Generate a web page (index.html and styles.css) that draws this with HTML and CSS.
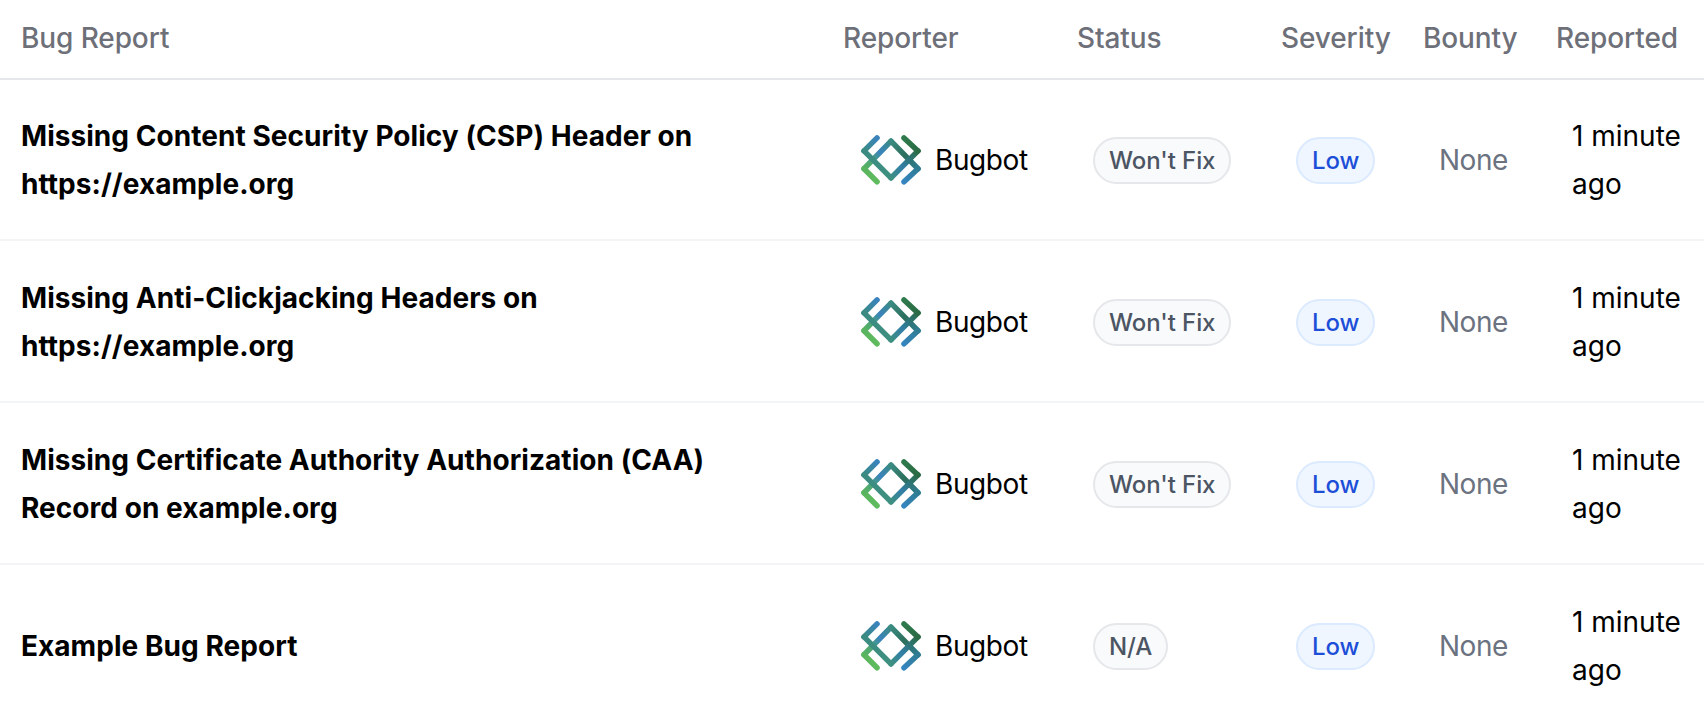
FILE: index.html
```html
<!DOCTYPE html>
<html lang="en">
<head>
<meta charset="utf-8">
<title>Bug Reports</title>
<link rel="stylesheet" href="styles.css">
</head>
<body>
<svg class="defs" width="0" height="0" aria-hidden="true">
  <defs>
    <linearGradient id="g1" gradientUnits="userSpaceOnUse" x1="112" y1="52" x2="72" y2="92"><stop offset="0" stop-color="#3a83bd"/><stop offset="1" stop-color="#3b8b82"/></linearGradient>
    <linearGradient id="g2" gradientUnits="userSpaceOnUse" x1="72" y1="92" x2="155" y2="175"><stop offset="0" stop-color="#3b8b82"/><stop offset="1" stop-color="#3e9080"/></linearGradient>
    <linearGradient id="g3" gradientUnits="userSpaceOnUse" x1="155" y1="175" x2="238" y2="92"><stop offset="0" stop-color="#3e9080"/><stop offset="0.4" stop-color="#327fa8"/><stop offset="1" stop-color="#2a6b45"/></linearGradient>
    <linearGradient id="g4" gradientUnits="userSpaceOnUse" x1="238" y1="92" x2="195" y2="52"><stop offset="0" stop-color="#2a6b45"/><stop offset="1" stop-color="#2f7a4c"/></linearGradient>
    <linearGradient id="g5" gradientUnits="userSpaceOnUse" x1="112" y1="187" x2="72" y2="147"><stop offset="0" stop-color="#5fbb5e"/><stop offset="1" stop-color="#5ab55e"/></linearGradient>
    <linearGradient id="g6" gradientUnits="userSpaceOnUse" x1="72" y1="147" x2="155" y2="62"><stop offset="0" stop-color="#5ab55e"/><stop offset="0.3" stop-color="#4aa37a"/><stop offset="0.6" stop-color="#3a83bd"/><stop offset="1" stop-color="#3b8b82"/></linearGradient>
    <linearGradient id="g7" gradientUnits="userSpaceOnUse" x1="155" y1="62" x2="238" y2="147"><stop offset="0" stop-color="#3b8b82"/><stop offset="0.5" stop-color="#2c6f5c"/><stop offset="1" stop-color="#2f7c92"/></linearGradient>
    <linearGradient id="g8" gradientUnits="userSpaceOnUse" x1="238" y1="147" x2="195" y2="187"><stop offset="0" stop-color="#2f7c92"/><stop offset="1" stop-color="#3585c0"/></linearGradient>
    <symbol id="bugbot" viewBox="60 40 190 160">
      <g fill="none" stroke-width="17" stroke-linecap="round" stroke-linejoin="round">
        <path stroke="url(#g5)" d="M112 187L72 147"/>
        <path stroke="url(#g6)" d="M72 147L155 62"/>
        <path stroke="url(#g7)" d="M155 62L238 147"/>
        <path stroke="url(#g8)" d="M238 147L195 187"/>
        <path stroke="url(#g1)" d="M112 52L72 92"/>
        <path stroke="url(#g2)" d="M72 92L155 175"/>
        <path stroke="url(#g3)" d="M155 175L238 92"/>
        <path stroke="url(#g4)" d="M238 92L195 52"/>
      </g>
    </symbol>
  </defs>
</svg>
<table class="reports">
  <colgroup>
    <col class="c-title"><col class="c-reporter"><col class="c-status"><col class="c-severity"><col class="c-bounty"><col class="c-reported">
  </colgroup>
  <thead>
    <tr><th>Bug Report</th><th>Reporter</th><th>Status</th><th>Severity</th><th>Bounty</th><th>Reported</th></tr>
  </thead>
  <tbody>
    <tr>
      <td class="title">Missing Content Security Policy (CSP) Header on https://example.org</td>
      <td><div class="reporter"><svg class="logo" viewBox="0 0 62 52"><use href="#bugbot" width="62" height="52"/></svg><span>Bugbot</span></div></td>
      <td><span class="pill pill-gray">Won't Fix</span></td>
      <td><span class="pill pill-blue">Low</span></td>
      <td class="muted">None</td>
      <td>1 minute ago</td>
    </tr>
    <tr>
      <td class="title">Missing Anti-Clickjacking Headers on https://example.org</td>
      <td><div class="reporter"><svg class="logo" viewBox="0 0 62 52"><use href="#bugbot" width="62" height="52"/></svg><span>Bugbot</span></div></td>
      <td><span class="pill pill-gray">Won't Fix</span></td>
      <td><span class="pill pill-blue">Low</span></td>
      <td class="muted">None</td>
      <td>1 minute ago</td>
    </tr>
    <tr>
      <td class="title">Missing Certificate Authority Authorization (CAA) Record on example.org</td>
      <td><div class="reporter"><svg class="logo" viewBox="0 0 62 52"><use href="#bugbot" width="62" height="52"/></svg><span>Bugbot</span></div></td>
      <td><span class="pill pill-gray">Won't Fix</span></td>
      <td><span class="pill pill-blue">Low</span></td>
      <td class="muted">None</td>
      <td>1 minute ago</td>
    </tr>
    <tr>
      <td class="title">Example Bug Report</td>
      <td><div class="reporter"><svg class="logo" viewBox="0 0 62 52"><use href="#bugbot" width="62" height="52"/></svg><span>Bugbot</span></div></td>
      <td><span class="pill pill-gray">N/A</span></td>
      <td><span class="pill pill-blue">Low</span></td>
      <td class="muted">None</td>
      <td>1 minute ago</td>
    </tr>
  </tbody>
</table>
</body>
</html>
```
FILE: styles.css
```css
html, body {
  margin: 0;
  padding: 0;
  height: 712px;
  overflow: hidden;
  background: #fff;
}
body {
  font-family: Inter, "Liberation Sans", sans-serif;
  font-size: 28px;
  line-height: 48px;
  color: #000;
}
.defs {
  display: block;
  height: 0;
  width: 0;
}
.reports {
  width: 1704px;
  table-layout: fixed;
  border-collapse: collapse;
}
.c-title { width: 821px; }
.c-reporter { width: 234px; }
.c-status { width: 204px; }
.c-severity { width: 142px; }
.c-bounty { width: 133px; }
.c-reported { width: 170px; }
th {
  height: 76px;
  padding: 0 0 2px 22px;
  text-align: left;
  font-weight: 500;
  letter-spacing: -0.1px;
  color: #6e7079;
  border-bottom: 2px solid #e5e7eb;
  white-space: nowrap;
}
th:first-child { padding-left: 21px; }
td {
  padding: 33px 0 31px 38px;
  border-bottom: 2px solid #f3f4f6;
  vertical-align: middle;
}
tbody tr:first-child td { padding-top: 32px; }
td.title {
  padding-left: 21px;
  padding-right: 80px;
  font-weight: 700;
  letter-spacing: 0.05px;
}
.muted {
  color: #6b7280;
  letter-spacing: -0.5px;
}
.reporter {
  display: flex;
  align-items: center;
  gap: 13px;
  margin-left: 1px;
  letter-spacing: -0.4px;
}
.logo {
  width: 62px;
  height: 52px;
  flex: none;
}
.pill {
  display: inline-block;
  position: relative;
  top: -1px;
  padding: 0 14px;
  font-size: 24px;
  line-height: 43px;
  font-weight: 500;
  letter-spacing: -0.1px;
  border: 2px solid;
  border-radius: 999px;
  vertical-align: middle;
  white-space: nowrap;
}
.pill-gray {
  background: #f9fafb;
  border-color: #e5e7eb;
  color: #4b5563;
}
.pill-blue {
  margin-left: -1px;
  background: #eff6ff;
  border-color: #dbeafe;
  color: #1d4ed8;
}
```
